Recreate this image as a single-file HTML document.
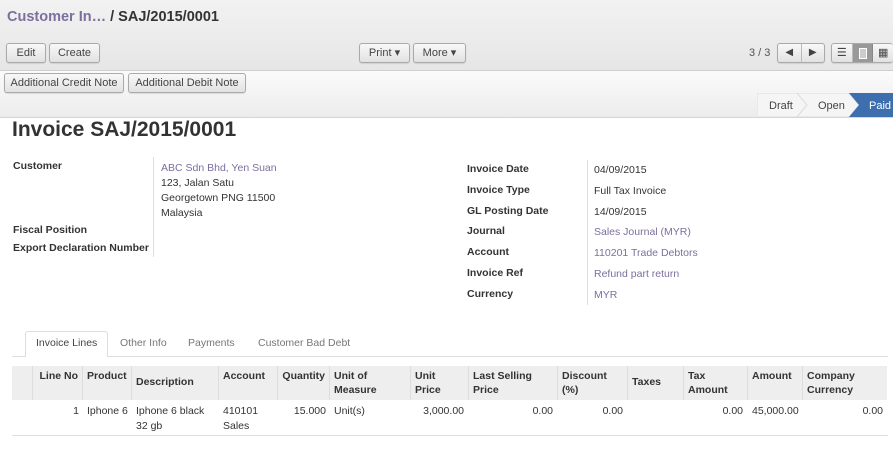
<!DOCTYPE html>
<html><head><style>
*{margin:0;padding:0;box-sizing:border-box}
body{width:893px;height:450px;overflow:hidden;background:#fff;font-family:"Liberation Sans",Arial,sans-serif;font-size:10.5px;color:#333;position:relative}
.a{position:absolute;white-space:nowrap}
.top{position:absolute;left:0;top:0;width:893px;height:71px;background:linear-gradient(#f2f2f2,#e6e6e6);border-bottom:1px solid #cfcfcf}
.bar2{position:absolute;left:0;top:71px;width:893px;height:47px;background:linear-gradient(#fbfbfb,#ececec);border-bottom:1px solid #d6d6d6}
.btn{position:absolute;height:20px;border:1px solid #aaa;border-radius:3px;background:linear-gradient(#f8f8f8,#e2e2e2);font-size:11px;color:#444;text-align:center;line-height:18px;box-shadow:0 1px 1px rgba(0,0,0,.1)}
.lbl{position:absolute;font-weight:bold;font-size:10.5px;color:#333}
.val{position:absolute;font-size:10.5px;color:#333}
.lnk{color:#7c6f9e}
.th{position:absolute;top:366px;height:34px;background:#eee;border-right:1px solid #ddd;font-weight:bold;font-size:10.5px;padding:3px 4px;line-height:14px}
.td{position:absolute;top:404px;font-size:10.5px;line-height:15px}
</style></head><body>
<div class="top"></div>
<div class="a" style="left:7px;top:9px;font-size:14.5px;font-weight:bold;color:#7c6f9e">Customer In… <span style="color:#333">/ SAJ/2015/0001</span></div>
<div class="btn" style="left:6px;top:43px;width:40px">Edit</div>
<div class="btn" style="left:49px;top:43px;width:51px">Create</div>
<div class="btn" style="left:359px;top:43px;width:51px">Print ▾</div>
<div class="btn" style="left:413px;top:43px;width:53px">More ▾</div>
<div class="a" style="left:749px;top:47px;font-size:11px;color:#555">3 / 3</div>
<div class="btn" style="left:777px;top:43px;width:48px;display:flex;padding:0"><span style="flex:1;border-right:1px solid #bbb;font-size:10px">◀</span><span style="flex:1;font-size:10px">▶</span></div>
<div class="btn" style="left:831px;top:43px;width:62px;display:flex;padding:0;border-right:none"><span style="flex:1;border-right:1px solid #bbb">☰</span><span style="flex:1;background:#999;border-right:1px solid #888"><span style="display:inline-block;width:8px;height:11px;border:1.5px solid #fff;vertical-align:middle;background:#ccc"></span></span><span style="flex:1">▦</span></div>
<div class="bar2"></div>
<div class="btn" style="left:4px;top:73px;width:120px">Additional Credit Note</div>
<div class="btn" style="left:128px;top:73px;width:118px">Additional Debit Note</div>
<svg class="a" style="left:757px;top:93px" width="136" height="24"><polygon points="0,0 40,0 50,12 40,24 0,24" fill="#f5f5f5" stroke="#ddd"/><polygon points="40,0 92,0 102,12 92,24 40,24 50,12" fill="#f5f5f5" stroke="#ddd"/><polygon points="92,0 136,0 136,24 92,24 102,12" fill="#3d6fae"/><text x="12" y="16" font-size="11" fill="#444" font-family="Liberation Sans">Draft</text><text x="61" y="16" font-size="11" fill="#444" font-family="Liberation Sans">Open</text><text x="112" y="16" font-size="11" fill="#fff" font-family="Liberation Sans">Paid</text></svg>
<div class="a" style="left:12px;top:118px;font-size:21px;font-weight:bold;color:#333">Invoice SAJ/2015/0001</div>
<div class="lbl" style="left:13px;top:160px">Customer</div>
<div class="lbl" style="left:13px;top:224px">Fiscal Position</div>
<div class="lbl" style="left:13px;top:242px">Export Declaration Number</div>
<div class="a" style="left:153px;top:157px;width:1px;height:100px;background:#ddd"></div>
<div class="val" style="left:161px;top:161px;line-height:15px"><span class="lnk">ABC Sdn Bhd, Yen Suan</span><br>123, Jalan Satu<br>Georgetown PNG 11500<br>Malaysia</div>
<div class="a" style="left:587px;top:160px;width:1px;height:145px;background:#ddd"></div>
<div class="lbl" style="left:467px;top:159px;line-height:20.8px">Invoice Date<br>Invoice Type<br>GL Posting Date<br>Journal<br>Account<br>Invoice Ref<br>Currency</div>
<div class="val" style="left:594px;top:160px;line-height:20.8px">04/09/2015<br>Full Tax Invoice<br>14/09/2015<br><span class="lnk">Sales Journal (MYR)</span><br><span class="lnk">110201 Trade Debtors</span><br><span class="lnk">Refund part return</span><br><span class="lnk">MYR</span></div>
<div class="a" style="left:12px;top:356px;width:876px;height:1px;background:#ddd"></div>
<div class="a" style="left:25px;top:331px;width:83px;height:26px;background:#fff;border:1px solid #ddd;border-bottom:none;border-radius:3px 3px 0 0"></div>
<div class="a" style="left:36px;top:337px;color:#444">Invoice Lines</div>
<div class="a" style="left:120px;top:337px;color:#777">Other Info</div>
<div class="a" style="left:188px;top:337px;color:#777">Payments</div>
<div class="a" style="left:258px;top:337px;color:#777">Customer Bad Debt</div>
<div class="th" style="left:12px;width:21px"></div>
<div class="th" style="left:33px;width:50px;text-align:right">Line No</div>
<div class="th" style="left:83px;width:49px">Product</div>
<div class="th" style="left:132px;width:87px;padding-top:9px">Description</div>
<div class="th" style="left:219px;width:59px">Account</div>
<div class="th" style="left:278px;width:52px;text-align:right">Quantity</div>
<div class="th" style="left:330px;width:81px">Unit of<br>Measure</div>
<div class="th" style="left:411px;width:58px">Unit<br>Price</div>
<div class="th" style="left:469px;width:89px">Last Selling<br>Price</div>
<div class="th" style="left:558px;width:70px">Discount<br>(%)</div>
<div class="th" style="left:628px;width:56px;padding-top:9px">Taxes</div>
<div class="th" style="left:684px;width:64px">Tax<br>Amount</div>
<div class="th" style="left:748px;width:55px">Amount</div>
<div class="th" style="left:803px;width:84px;border-right:none">Company<br>Currency</div>
<div class="td" style="left:33px;width:46px;text-align:right">1</div>
<div class="td" style="left:87px">Iphone 6</div>
<div class="td" style="left:136px">Iphone 6 black<br>32 gb</div>
<div class="td" style="left:223px">410101<br>Sales</div>
<div class="td" style="left:278px;width:48px;text-align:right">15.000</div>
<div class="td" style="left:334px">Unit(s)</div>
<div class="td" style="left:411px;width:53px;text-align:right">3,000.00</div>
<div class="td" style="left:469px;width:84px;text-align:right">0.00</div>
<div class="td" style="left:558px;width:65px;text-align:right">0.00</div>
<div class="td" style="left:684px;width:59px;text-align:right">0.00</div>
<div class="td" style="left:752px">45,000.00</div>
<div class="td" style="left:803px;width:80px;text-align:right">0.00</div>
<div class="a" style="left:12px;top:435px;width:876px;height:1px;background:#ddd"></div>
</body></html>
